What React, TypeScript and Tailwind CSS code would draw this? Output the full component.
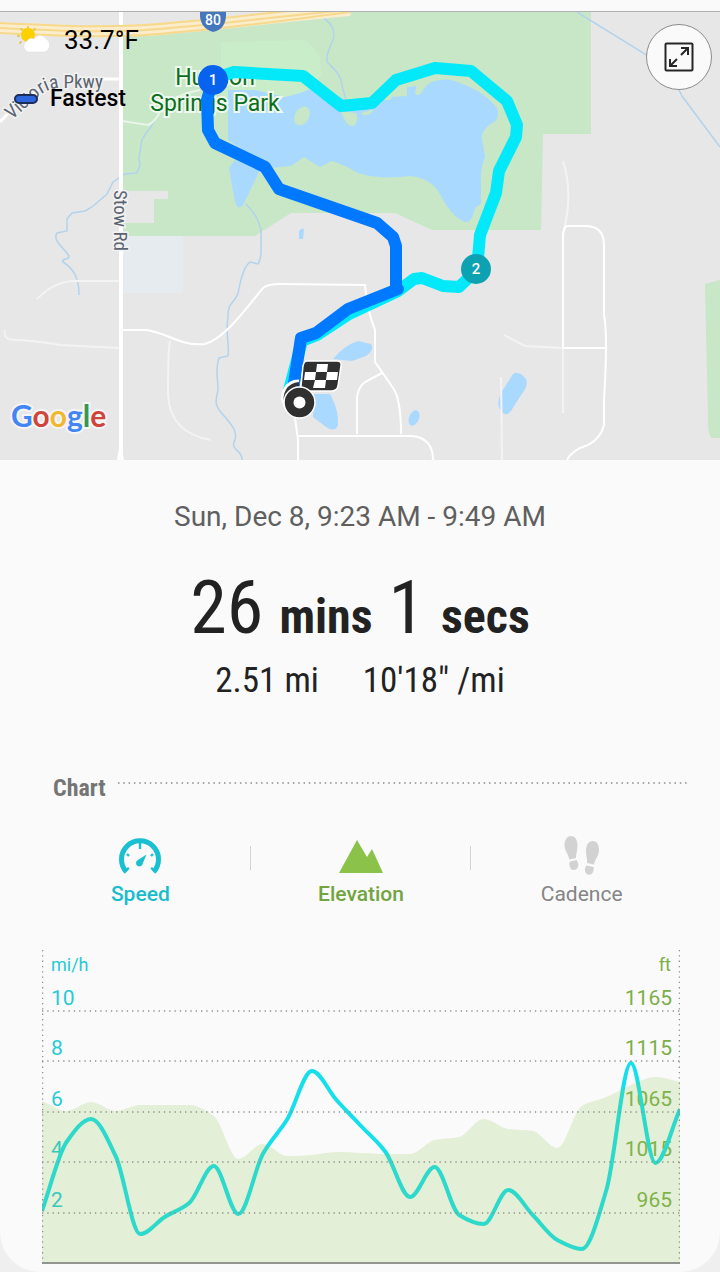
import { useState } from 'react';

type ChartTab = 'speed' | 'elevation' | 'cadence';

const CHART_WIDTH = 638;
const CHART_HEIGHT = 314;

// y positions inside the chart, one sample per step
const speedPoints = [
  261, 192, 169, 206, 284, 267, 253, 216, 264, 204, 169, 121, 150, 176, 202, 247, 217, 265, 274,
  240, 265, 290, 299, 240, 113, 213, 159,
];
const elevationPoints = [
  151, 161, 152, 161, 155, 155, 155, 166, 209, 194, 206, 205, 202, 203, 204, 204, 190, 187, 169,
  179, 181, 198, 156, 147, 135, 127, 132,
];

const gridRows = [
  { y: 61, speed: '10', elevation: '1165' },
  { y: 111, speed: '8', elevation: '1115' },
  { y: 162, speed: '6', elevation: '1065' },
  { y: 212, speed: '4', elevation: '1015' },
  { y: 263, speed: '2', elevation: '965' },
];

// Monotone cubic curve through evenly spaced samples
const smoothPath = (points: number[]) => {
  const step = CHART_WIDTH / (points.length - 1);
  const slopes = points.slice(1).map((y, i) => y - points[i]);
  const tangents = points.map((_, i) => {
    if (i === 0) return slopes[0];
    if (i === points.length - 1) return slopes[i - 1];
    const a = slopes[i - 1];
    const b = slopes[i];
    return a * b <= 0 ? 0 : (2 * a * b) / (a + b);
  });
  return points.slice(1).reduce((path, y, i) => {
    const x = i * step;
    const c1 = `${x + step / 3} ${points[i] + tangents[i] / 3}`;
    const c2 = `${x + (step * 2) / 3} ${y - tangents[i + 1] / 3}`;
    return `${path} C${c1} ${c2} ${x + step} ${y}`;
  }, `M0 ${points[0]}`);
};

function WeatherIcon() {
  return (
    <svg viewBox="0 0 36 28" className="h-7 w-9" aria-hidden="true">
      <g stroke="#e3c95f" strokeWidth="2" strokeLinecap="round">
        <path d="M12 1v1M5 3l1 1M19 3l-1 1M2 10h1M4 17l1-1" />
      </g>
      <circle cx="12" cy="9" r="7" fill="#fdd000" />
      <path
        d="M12 26a6 6 0 0 1-1-11 5 5 0 0 1 7-2 7 7 0 0 1 12 0 7 7 0 0 1-2 13z"
        fill="#fff"
        stroke="#dcdcdc"
        strokeWidth=".5"
      />
    </svg>
  );
}

function SpeedIcon() {
  return (
    <svg viewBox="0 0 44 36" className="h-9 w-11" aria-hidden="true">
      <path d="M8.5 34A18.5 18.5 0 1 1 35.5 34" fill="none" stroke="#19c0d2" strokeWidth="5" />
      <path
        d="M22 5v6M9 16l2 2M35 16l-2 2M6 33l5-3M38 33l-5-3"
        stroke="#19c0d2"
        strokeWidth="2.4"
      />
      <path d="M28.500 16.500 24.800 25.200a3.400 3.400 0 1 1-5.300-3z" fill="#19c0d2" />
    </svg>
  );
}

function ElevationIcon() {
  return (
    <svg viewBox="0 0 44 36" className="h-9 w-11" aria-hidden="true">
      <path d="M0 35 18 2 28 19 33 11 44 35z" fill="#8bc34a" />
    </svg>
  );
}

function CadenceIcon() {
  return (
    <svg viewBox="0 0 36 40" className="h-10 w-9" aria-hidden="true">
      <g fill="#d2d2d2">
        <path d="M7 0c4.500 0 6.500 4 6.500 10 0 5-1.700 8-1.500 12l-6.700 1.500C4.500 18 .5 15 .5 9 .5 4 3 0 7 0z" />
        <path d="M5.500 25.700 12.700 24c.8 2 2 3.500 1.500 6.300-.6 2.700-2.700 4-5 3.700-3-.5-4.200-4-3.700-8.300z" />
        <path d="M29 5c-4.500 0-7 4-7 10 0 5 1.500 8 1 12l7 1.500C31 23 35 20 35 14c0-5-2-9-6-9z" />
        <path d="M29.700 31 22.300 29.500c-.8 1.500-1.800 3-1.300 5.500.5 2.500 2.300 4 4.500 3.800 3-.3 4.500-3.600 4.200-7.800z" />
      </g>
    </svg>
  );
}

function RouteMap() {
  return (
    <svg
      viewBox="0 12 720 448"
      preserveAspectRatio="xMidYMid slice"
      className="block h-[448px] w-full bg-[#e7e7e7]"
      fontFamily="Roboto, sans-serif"
      role="img"
      aria-label="Route map"
    >
      {/* Parks */}
      <path d="M122 34 200 24 340 11H591V134H543L541 230H432L395 213H291L255 236H122z" fill="#c7e7c7" />
      <path d="M221 42 306 40 319 54 322 75 310 90 285 97H221z" fill="#c9edc9" />
      <path d="M122 191H168V199H154V223H122z" fill="#e7e7e7" />
      <path d="M705 284 720 280V438H712Q708 436 708 420z" fill="#c7e7c7" />
      <rect x="122" y="236" width="61" height="57" fill="#e6ebef" />

      {/* Streams */}
      <g fill="none" stroke="#b3d3ec" strokeWidth="1.500">
        <path d="M155 120C150 130 140 138 141 145L139 158 140 165 137 173 125 174 113 182 107 194 92 207 85 211 72 213 67 219V231L57 233C52 240 64 248 69 256 70 260 61 258 63 262 74 269 79 278 79 295" />
        <path d="M322 17C330 22 336 30 333 40 330 48 325 56 327 62 335 70 341 74 342 86L346 100" />
        <path d="M246 204C252 210 262 222 261 236 261 250 262 258 258 264L250 262C242 268 240 285 238 293 236 302 227 302 228 318 225 334 230 345 228 356L219 358C215 368 218 380 218 390 215 402 214 406 226 418 234 428 237 432 235 440 229 450 243 450 242 460" />
        <path d="M577 12 645 54Q675 80 682 96L720 147" />
      </g>

      {/* Water */}
      <g fill="#aad9ff">
        <path d="M228 90 255 90 285 97Q300 94 320 85L345 100 390 100Q400 85 410 87 425 84 435 81 448 77 460 83 485 92 497 108 500 118 494 122 480 130 482 139L485 157Q480 170 481 185V204Q474 207 474 212 471 223 465 222 452 217 441 196 432 178 410 176 380 180 358 173 345 165 332 161L320 167 304 157 291 166 270 168 228 140z" />
        <path d="M229 168 235 160 260 170 243 205Q238 211 235 202z" />
        <path d="M299 231Q301 228 304 229L303 239H299z" />
        <path d="M333 359Q345 345 358 341L371 344Q375 350 366 356L352 361z" />
        <path d="M314 394 330 394Q339 410 338 425 335 433 326 427L313 417z" />
        <ellipse cx="414" cy="418" rx="5" ry="8" transform="rotate(22 414 418)" />
        <path d="M513 374Q519 370 526 379 529 386 521 395L511 411Q506 417 502 412 495 405 501 393z" />
      </g>
      <g fill="#c7e7c7">
        <ellipse cx="302" cy="116" rx="7" ry="10" transform="rotate(30 302 116)" />
        <path d="M341 111Q346 127 353 126 360 122 356 113zM361 113Q368 119 374 109zM390 97 407 96V86L398 88zM415 94Q420 98 424 88 431 81 438 79L418 78z" />
      </g>

      {/* Streets */}
      <g fill="none" stroke="#f3f3f3" strokeWidth="2">
        <path d="M122 121 148 125Q155 122 160 112 172 95 200 90" stroke="#e8f5e8" />
        <path d="M37 299Q55 281 75 281H119M5 330Q3 340 15 340 30 340 60 345L119 348" />
        <path d="M170 341Q168 350 168 395 170 433 211 440" />
        <path d="M563 161Q571 185 567 215L563 235M563 346V413M501 377 502 460M504 335 525 346 563 348" />
      </g>
      <g fill="none" stroke="#fff" strokeWidth="2">
        <path d="M122 330H145C165 331 180 347 205 344 225 338 245 310 263 288Q268 284 280 284L365 285Q367 310 375 330V362Q385 376 393 388 401 399 401 434M382 373 365 382Q357 388 357 400V434M297 436H412Q433 438 433 460M295 418 298 440V460" />
        <path d="M563 347V234Q564 227 567 226H585Q604 226 604 245V315Q608 335 604 400V425Q601 438 588 445 572 450 567 460M563 348H606" />
      </g>
      <path d="M100 79H120M0 122Q15 104 40 90" stroke="#fff" strokeWidth="3" fill="none" />
      <path d="M121 12V460" stroke="#fff" strokeWidth="4" />
      <path d="M117 460 119 448H122L124 460z" fill="#fff" />

      {/* Highway */}
      <path d="M0 28C60 31 120 34 180 27 240 22 280 16 350 10" fill="none" stroke="#fbeccb" strokeWidth="12" />
      <g fill="none" stroke="#f6d98c" strokeWidth="2">
        <path d="M0 23C60 26 120 29 180 22 240 17 280 11 350 5" />
        <path d="M0 28C60 31 120 34 180 27 240 22 280 16 350 10" />
        <path d="M0 33C60 36 120 39 180 32 240 27 280 21 350 12" />
      </g>
      <path d="M200 12H226Q227 29 213 32 199 28 200 12z" fill="#4577bd" />
      <text x="213" y="25" fontSize="14" fontWeight="500" fill="#fff" textAnchor="middle">80</text>

      {/* Street and park names */}
      <g
        fill="#5b6470"
        stroke="#f2f2f2"
        strokeWidth="3"
        paintOrder="stroke"
        fontFamily="'Roboto Condensed', Roboto, sans-serif"
        fontSize="19"
      >
        <path id="victoria" d="M12 120 40 95Q50 88 60 88L120 88" fill="none" stroke="none" />
        <text>
          <textPath href="#victoria">Victoria Pkwy</textPath>
        </text>
        <text transform="translate(114 190) rotate(90)">Stow Rd</text>
      </g>
      <g fill="#0c6e20" stroke="#eef8ee" strokeWidth="4" paintOrder="stroke" fontSize="23" textAnchor="middle">
        <text x="215" y="85">Hudson</text>
        <text x="215" y="111">Springs Park</text>
      </g>

      {/* Route */}
      <g fill="none" strokeLinejoin="round" strokeLinecap="round" strokeWidth="12">
        <path d="M213 79 234 72 303 76 341 106 372 103 396 80 435 68 471 71 507 101 517 125 516 137 499 171 496 193 480 235 477 270 459 287 443 286 422 278 414 279 398 291 349 314 317 335 302 341 289 390" stroke="#04e9f9" />
        <path d="M213 79 207 100 208 130 215 143 265 167 279 189 377 223 393 237 396 246V288L398 289 348 309 316 333 301 338 293 390" stroke="#0078ff" />
      </g>
      <circle cx="213" cy="80" r="15" fill="#0763ed" />
      <circle cx="476" cy="269" r="15" fill="#0da2b2" />
      <g fill="#fff" fontSize="15" fontWeight="500" textAnchor="middle">
        <text x="213" y="85">1</text>
        <text x="476" y="274">2</text>
      </g>

      {/* Finish flag and start marker */}
      <path d="M286 405A15 15 0 0 1 299 382" fill="none" stroke="#fff" strokeWidth="5" />
      <path d="M287 404A14 14 0 0 1 299 384" fill="none" stroke="#333" strokeWidth="4" />
      <path
        d="M307 361H337Q342 361 341 366L338 386Q337 391 332 391H305Q300 391 301 386L303 366Q304 361 307 361z"
        fill="#303030"
        stroke="#fff"
        strokeWidth="1.500"
      />
      <path
        d="M317 364H328L327 372H316zM305 372H316L315 380H304zM327 372H338L337 380H326zM315 380H326L325 388H313z"
        fill="#fff"
      />
      <circle cx="299.500" cy="402.500" r="15.500" fill="#303030" stroke="#fff" strokeWidth="1.500" />
      <circle cx="299.500" cy="402.500" r="6" fill="#fff" />

      <text
        x="11"
        y="427"
        fontFamily="Lato, sans-serif"
        fontSize="30"
        fontWeight="700"
        stroke="#f5f5f5"
        strokeWidth="4"
        paintOrder="stroke"
      >
        <tspan fill="#4285f4">G</tspan>
        <tspan fill="#d0453a">o</tspan>
        <tspan fill="#f0b92d">o</tspan>
        <tspan fill="#4285f4">g</tspan>
        <tspan fill="#34994f">l</tspan>
        <tspan fill="#d0453a">e</tspan>
      </text>
    </svg>
  );
}

function ActivityChart({ showSpeed, showElevation }: { showSpeed: boolean; showElevation: boolean }) {
  return (
    <svg
      viewBox={`0 0 ${CHART_WIDTH} ${CHART_HEIGHT}`}
      className="block w-full"
      fontFamily="Roboto, sans-serif"
      role="img"
      aria-label="Speed and elevation chart"
    >
      <g fontSize="18">
        <text x="9" y="21" fill="#25cbd6">mi/h</text>
        <text x="629" y="21" fill="#7cae47" textAnchor="end">ft</text>
      </g>
      {gridRows.map((row) => (
        <g key={row.y} fontSize="21">
          <text x="9" y={row.y - 6} fill="#25cbd6">{row.speed}</text>
          <text x="630" y={row.y - 6} fill="#7cae47" textAnchor="end">{row.elevation}</text>
        </g>
      ))}
      {showSpeed && (
        <path
          d={smoothPath(speedPoints)}
          fill="none"
          stroke="#15dfea"
          strokeWidth="4"
          strokeLinejoin="round"
        />
      )}
      {showElevation && (
        <path
          d={`${smoothPath(elevationPoints)} V${CHART_HEIGHT} H0z`}
          fill="#8bc34a"
          fillOpacity=".2"
        />
      )}
      <g stroke="#8f8f8f" strokeDasharray="1.300 4" strokeWidth="1.300">
        {gridRows.map((row) => (
          <path key={row.y} d={`M0 ${row.y}H${CHART_WIDTH}`} />
        ))}
        <path d="M.6 0V313M637.400 0V313" />
      </g>
      <path d="M0 313H638" stroke="#777" strokeWidth="1.500" />
    </svg>
  );
}

export default function App() {
  const [hidden, setHidden] = useState<ChartTab[]>(['cadence']);
  const [expanded, setExpanded] = useState(false);

  const toggle = (tab: ChartTab) => {
    setHidden((prev) => (prev.includes(tab) ? prev.filter((t) => t !== tab) : [...prev, tab]));
  };

  return (
    <div className="bg-[#efefef] font-[Roboto,sans-serif]">
      <main className="rounded-b-[40px] bg-[#fafafa] pb-2">
        <div className="h-3 border-b border-[#b0b0b0]" />
        <section className="relative">
          <RouteMap />
          <div className="absolute top-3.5 left-4 flex h-7 items-center gap-3 text-black">
            <WeatherIcon />
            <span className="text-[26px]">33.7°F</span>
          </div>
          <div className="absolute top-[75px] left-3.5 flex h-6 items-center gap-3 text-black">
            <span className="h-2.5 w-6 rounded-full border-2 border-[#1b2d58] bg-[#2d66dc]" />
            <span className="text-[23px] font-medium">Fastest</span>
          </div>
          <button
            type="button"
            aria-label="Expand map"
            aria-pressed={expanded}
            onClick={() => setExpanded(!expanded)}
            className="absolute top-3 right-2 flex size-[66px] items-center justify-center rounded-full border border-[#8c8c8c] bg-[#fafafa]"
          >
            <svg viewBox="0 0 30 30" className="size-[30px]" fill="none" stroke="#262626" strokeWidth="2">
              <rect x="1.500" y="1.500" width="27" height="27" rx="1" />
              <path d="M17 13 24 6M17 6h7v7M13 17l-7 7M6 17v7h7" />
            </svg>
          </button>
        </section>

        <section className="flex flex-col items-center pt-9 text-[#222222]">
          <p className="text-[28px] leading-[42px] text-[#5f5f5f]">Sun, Dec 8, 9:23 AM - 9:49 AM</p>
          <h1 className="mt-[26px] flex items-baseline gap-4 font-['Roboto_Condensed',Roboto,sans-serif] text-5xl leading-[88px] font-bold">
            <span className="text-[74px] font-normal">26</span>
            <span>mins</span>
            <span className="text-[74px] font-normal">1</span>
            <span>secs</span>
          </h1>
          <p className="flex gap-11 font-['Roboto_Condensed',Roboto,sans-serif] text-[35px] leading-10">
            <span>2.51 mi</span>
            <span>10'18" /mi</span>
          </p>
        </section>

        <section className="pt-[71px]">
          <div className="flex gap-3 pr-[30px] pl-[53px]">
            <h2 className="font-['Roboto_Condensed',Roboto,sans-serif] text-2xl font-bold text-[#757575]">
              Chart
            </h2>
            <svg className="mt-2.5 h-0.5 flex-1" aria-hidden="true">
              <line x1="0" y1="1" x2="100%" y2="1" stroke="#8a8a8a" strokeWidth="1.500" strokeDasharray="1.500 3.800" />
            </svg>
          </div>

          <div className="mt-8 grid grid-cols-3 pr-7 pl-[30px] text-[21px] leading-8">
            <button
              type="button"
              onClick={() => toggle('speed')}
              className="relative flex flex-col items-center font-medium text-[#19bccb]"
            >
              <span className="flex h-[42px] items-end pb-1"><SpeedIcon /></span>
              Speed
              <span className="absolute top-2.5 right-0 h-6 w-px bg-[#d4d4d4]" />
            </button>
            <button
              type="button"
              onClick={() => toggle('elevation')}
              className="relative flex flex-col items-center font-medium text-[#72a440]"
            >
              <span className="flex h-[42px] items-end pb-1"><ElevationIcon /></span>
              Elevation
              <span className="absolute top-2.5 right-0 h-6 w-px bg-[#d4d4d4]" />
            </button>
            <button
              type="button"
              onClick={() => toggle('cadence')}
              className="flex flex-col items-center text-[#858585]"
            >
              <span className="flex h-[42px] items-start"><CadenceIcon /></span>
              Cadence
            </button>
          </div>

          <div className="mt-10 pr-10 pl-[42px]">
            <ActivityChart
              showSpeed={!hidden.includes('speed')}
              showElevation={!hidden.includes('elevation')}
            />
          </div>
        </section>
      </main>
    </div>
  );
}
